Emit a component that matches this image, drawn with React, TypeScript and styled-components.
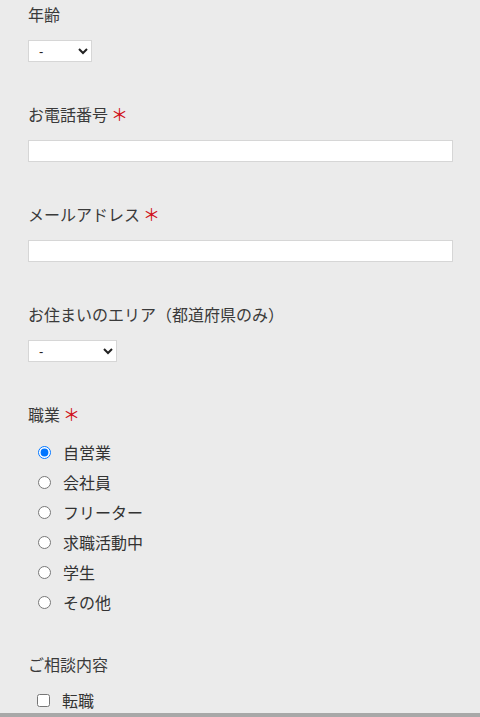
import styled, { createGlobalStyle } from 'styled-components'

const GlobalStyle = createGlobalStyle`
  html, body {
    margin: 0;
    padding: 0;
    background: #ebebeb;
    font-family: "Noto Sans CJK JP", "Noto Sans", sans-serif;
    color: #333;
  }
`

const Form = styled.form`
  padding: 2px 28px 0 28px;
  height: 711px;
  overflow: hidden;
`

const Field = styled.div<{ $gap?: number }>`
  margin-bottom: ${(p) => p.$gap ?? 40}px;
`

const Label = styled.div<{ $mb?: number }>`
  font-size: 16px;
  line-height: 24px;
  height: 24px;
  margin-bottom: ${(p) => p.$mb ?? 14}px;
  color: #3a3a3a;
`

const Required = styled.span`
  color: #d0121b;
  font-size: 17px;
  line-height: 1;
  margin-left: 3px;
`

const Select = styled.select<{ $w: number }>`
  width: ${(p) => p.$w}px;
  height: 22px;
  border: 1px solid #d6d6d6;
  border-radius: 0;
  background: #fff;
  font-size: 13px;
  padding: 0 6px;
  color: #222;
  display: block;
`

const TextInput = styled.input`
  display: block;
  box-sizing: border-box;
  width: 425px;
  height: 22px;
  border: 1px solid #d6d6d6;
  background: #fff;
  margin: 0;
`

const ChoiceList = styled.div`
  padding-left: 10px;
  display: flex;
  flex-direction: column;
`

const Choice = styled.label<{ $box?: boolean }>`
  display: flex;
  align-items: center;
  height: 30px;
  gap: 12px;
  font-size: 16px;
  color: #333;
  margin-left: ${(p) => (p.$box ? -1 : 0)}px;
  input {
    margin: 0;
    width: 13px;
    height: 13px;
  }
`

const BottomBar = styled.div`
  height: 4px;
  background: #a8a8a8;
`

const jobs = ['自営業', '会社員', 'フリーター', '求職活動中', '学生', 'その他']

export default function App() {
  return (
    <>
      <GlobalStyle />
      <Form>
        <Field>
          <Label>年齢</Label>
          <Select $w={64} defaultValue="-">
            <option>-</option>
          </Select>
        </Field>
        <Field>
          <Label>
            お電話番号<Required>＊</Required>
          </Label>
          <TextInput type="tel" />
        </Field>
        <Field>
          <Label>
            メールアドレス<Required>＊</Required>
          </Label>
          <TextInput type="email" />
        </Field>
        <Field>
          <Label>お住まいのエリア（都道府県のみ）</Label>
          <Select $w={89} defaultValue="-">
            <option>-</option>
          </Select>
        </Field>
        <Field $gap={35}>
          <Label $mb={11}>
            職業<Required>＊</Required>
          </Label>
          <ChoiceList>
            {jobs.map((j, i) => (
              <Choice key={j}>
                <input type="radio" name="job" defaultChecked={i === 0} />
                {j}
              </Choice>
            ))}
          </ChoiceList>
        </Field>
        <Field>
          <Label $mb={9}>ご相談内容</Label>
          <ChoiceList>
            <Choice $box>
              <input type="checkbox" />
              転職
            </Choice>
          </ChoiceList>
        </Field>
      </Form>
      <BottomBar />
    </>
  )
}
